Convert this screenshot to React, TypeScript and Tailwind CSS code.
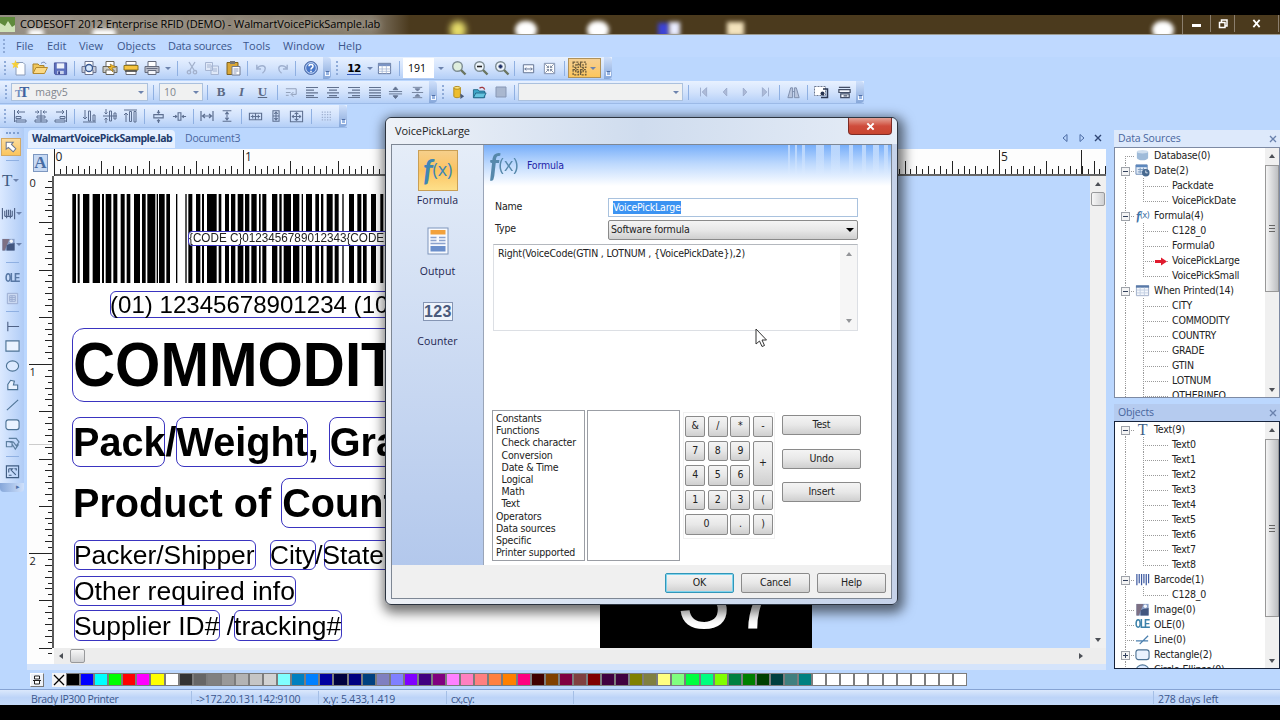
import { ReactNode } from 'react';
import clsx from 'clsx';

const glyphs: Record<string, ReactNode> = {
  new: (
    <>
      <path d="M5 2.500h7l2 2V15H5z" fill="#fdfeff" stroke="#8a9cba" />
      <path d="M4.500 0l1.200 3 3 .3-2.200 2 .8 3-2.800-1.600L1.700 8.300l.8-3L.3 3.300l3-.3z" fill="#f5cf3a" />
    </>
  ),
  open: (
    <>
      <path d="M1 13V4h5l1.500 1.500H12V8" fill="#f0c75c" stroke="#a9822b" />
      <path d="M1 13.500L4 7.500h11.500L12.500 13.500z" fill="#fbd984" stroke="#b58a2e" />
      <path d="M9 3.500c2-2 4-1.500 5 .5" fill="none" stroke="#6a7fae" />
    </>
  ),
  save: (
    <>
      <path d="M1.500 2h13v12.500h-12L1.500 13z" fill="#5b6fbd" stroke="#46539c" />
      <path d="M4 2.500h8v5.500H4z" fill="#eef2fb" />
      <path d="M4.500 10.500h7V14h-7z" fill="#c9d3ec" />
      <path d="M5.500 11h2v3h-2z" fill="#36428a" />
    </>
  ),
  preview: (
    <>
      <path d="M1 6.500h14v6H1z" fill="#c5cad8" stroke="#6b7490" />
      <path d="M4 1.500h8v5H4zM4 10h8v4.500H4z" fill="#fff" stroke="#6b7490" />
      <circle cx="8" cy="8" r="3.500" fill="#d7e8fb" stroke="#35558f" strokeWidth="1.300" />
    </>
  ),
  printFast: (
    <>
      <path d="M1 6.500h14v6H1z" fill="#c9c9c2" stroke="#69665c" />
      <path d="M4 1.500h8v5H4zM4 10h8v4.500H4z" fill="#fff" stroke="#69665c" />
      <path d="M8 4l6 3-4 1 1 4-5-5 3-.5z" fill="#f1b829" stroke="#8d6a14" strokeWidth=".6" />
    </>
  ),
  printLabel: (
    <>
      <path d="M3 1.500h10V5H3zM3 11h10v3.500H3z" fill="#fff" stroke="#6d6e76" />
      <path d="M1 5.500h14v4.500H1z" fill="#f6c441" stroke="#8c741f" />
      <path d="M2 11h12" stroke="#444" strokeWidth="1.400" />
    </>
  ),
  print: (
    <>
      <path d="M1 6.500h14v6H1z" fill="#b9bdc9" stroke="#656b7c" />
      <path d="M4 1.500h8v5H4z" fill="#fff" stroke="#656b7c" />
      <path d="M4 10.500h8v4H4z" fill="#f3f5fa" stroke="#656b7c" />
      <path d="M2.500 8.500h11" stroke="#666c80" />
    </>
  ),
  cut: (
    <path d="M5 2l5 8M11 2l-5 8M5 10.500a1.700 1.700 0 100 3.400 1.700 1.700 0 000-3.400M11 10.500a1.700 1.700 0 100 3.400 1.700 1.700 0 000-3.400" fill="none" stroke="#a3b1cc" strokeWidth="1.300" />
  ),
  copy: (
    <path d="M1.500 2.500h7v8h-7zM7 6h7.500v8.500H7zM3 5h4M3 7h3M9 9h4M9 11h4" fill="#dfe8f8" stroke="#a6b5d2" />
  ),
  paste: (
    <>
      <path d="M2 2.500h11v12H2z" fill="#d9a737" stroke="#7e6222" />
      <path d="M5 1h5v3H5z" fill="#777" />
      <path d="M7 6.500h8v8.500H7z" fill="#fff" stroke="#6f7890" />
      <path d="M8.500 9h5M8.500 11h5M8.500 13h3" stroke="#8b98ba" />
    </>
  ),
  undo: <path d="M3 4v4.500h4.500M3.500 8C6 4 12 4 12 8c0 2-1 3.500-3 5" fill="none" stroke="#9fb0cf" strokeWidth="1.500" />,
  redo: <path d="M13 4v4.500H8.500M12.500 8C10 4 4 4 4 8c0 2 1 3.500 3 5" fill="none" stroke="#9fb0cf" strokeWidth="1.500" />,
  help: (
    <>
      <circle cx="8" cy="8" r="6.500" fill="#4a78c8" stroke="#5671a8" />
      <circle cx="8" cy="8" r="5.300" fill="none" stroke="#c7d8f4" />
      <path d="M6 6.300C6 4 10 4 10 6.300 10 8 8 7.800 8 9.500M8 10.800v1.400" fill="none" stroke="#fff" strokeWidth="1.500" />
    </>
  ),
  table: (
    <>
      <path d="M1.500 2.500h13v11h-13z" fill="#fff" stroke="#5b7099" />
      <path d="M1.500 3h13v2.500h-13z" fill="#7b94c4" />
      <path d="M1.500 8.500h13M1.500 11h13M5.500 5v8.500M10 5v8.500" stroke="#a3b4d4" strokeWidth=".8" />
    </>
  ),
  zoom: (
    <>
      <circle cx="6.500" cy="6.500" r="4.800" fill="#dfeedd" stroke="#7d8c93" strokeWidth="1.400" />
      <path d="M10 10l4.500 4.500" stroke="#6b7560" strokeWidth="2.400" />
    </>
  ),
  zoomOut: (
    <>
      <circle cx="6.500" cy="6.500" r="4.800" fill="#eef5fb" stroke="#7d8c93" strokeWidth="1.400" />
      <path d="M10 10l4.500 4.500" stroke="#6b7560" strokeWidth="2.400" />
      <path d="M4 6.500h5" stroke="#222" strokeWidth="1.600" />
    </>
  ),
  zoomIn: (
    <>
      <circle cx="6.500" cy="6.500" r="4.800" fill="#eef5fb" stroke="#7d8c93" strokeWidth="1.400" />
      <path d="M10 10l4.500 4.500" stroke="#6b7560" strokeWidth="2.400" />
      <path d="M4.500 6.500h4M6.500 4.500v4" stroke="#1d2f66" strokeWidth="2" />
    </>
  ),
  fitWidth: (
    <path d="M2.500 4h11v8.500h-11zM4 8.500h8M5.500 7L4 8.500 5.500 10M10.500 7L12 8.500 10.500 10" fill="#f6f9ff" stroke="#5f708f" />
  ),
  fitPage: (
    <>
      <path d="M2.500 2.500h11v11h-11z" fill="#fff" stroke="#7c8cab" />
      <path d="M3.500 3.500L7 7M12.500 3.500L9 7M3.500 12.500L7 9M12.500 12.500L9 9M5 7h2V5M11 7H9V5M5 9h2v2M11 9H9v2" fill="none" stroke="#5f6d88" strokeWidth=".8" />
    </>
  ),
  nodes: (
    <path d="M2 2h5v5H2zM9 2h5v5H9zM2 9h5v5H2zM9 9h5v5H9zM4.500 4.500h7v7h-7z" fill="none" stroke="#6e5d3c" strokeDasharray="2 1" strokeWidth="1.200" />
  ),
  wrap: <path d="M2 4h11v6H8M10 7.500L7.500 10 10 12.500M2 8h5M2 11h3" fill="none" stroke="#8f9db6" />,
  left: <path d="M2 3.500h12M2 6.200h8M2 8.900h12M2 11.600h8M2 13.500h12" stroke="#62728f" strokeWidth="1.200" />,
  center: <path d="M2 3.500h12M4 6.200h8M2 8.900h12M4 11.600h8M2 13.500h12" stroke="#62728f" strokeWidth="1.200" />,
  right: <path d="M2 3.500h12M6 6.200h8M2 8.900h12M6 11.600h8M2 13.500h12" stroke="#62728f" strokeWidth="1.200" />,
  justify: <path d="M2 3.500h12M2 6.200h12M2 8.900h12M2 11.600h12M2 13.500h12" stroke="#62728f" strokeWidth="1.200" />,
  spaceOut: (
    <path d="M1 7h14M1 9.500h14M8 2L5.500 5h5zM8 14.500L5.500 11.500h5z" fill="#62728f" stroke="#62728f" />
  ),
  spaceIn: (
    <path d="M2 8h12M8 6.500L5.500 4h5zM8 9.500L5.500 12h5zM3 2.500h10M3 13.500h10" fill="#72819d" stroke="#72819d" />
  ),
  alignLeft: <path d="M2.500 2v12M5 4h8M7 2L5 4l2 2M4 8.500h5v2H4zM4 12h10v2H4z" fill="none" stroke="#5d6f90" />,
  alignMid: <path d="M8 2v12M2 4h4M14 4h-4M4 8h8v2H4zM2 12h12v2H2zM4.500 2.500L6 4 4.500 5.500M11.500 2.500L10 4l1.500 1.500" fill="none" stroke="#5d6f90" />,
  alignRight: <path d="M13.500 2v12M11 4H3M9 2l2 2-2 2M7 8.500h5v2H7zM2 12h10v2H2z" fill="none" stroke="#5d6f90" />,
  alignBottom: <path d="M2 14h13M4 2v9M2 9l2 2 2-2M7.500 3h2v10h-2zM12 7h2v6h-2z" fill="none" stroke="#5d6f90" />,
  alignMiddle: <path d="M1 8h14M4 1v5M4 15v-5M2.500 4.500L4 6l1.500-1.500M2.500 11.500L4 10l1.500 1.500M7.500 3h2v10h-2zM12 5h2v6h-2z" fill="none" stroke="#5d6f90" />,
  alignTop: <path d="M2 2h13M4 14V5M2 7l2-2 2 2M7.500 3.500h2v10h-2zM12 3.500h2V14h-2z" fill="none" stroke="#5d6f90" />,
  distV: <path d="M3 6h10v3.500H3zM8 1v3.500M8 15v-3.500M6.500 3L8 4.500 9.500 3M6.500 13L8 11.500 9.500 13" fill="none" stroke="#5d6f90" strokeWidth="1.200" />,
  distH: <path d="M6.500 4h3v8h-3zM1 8h4M15 8h-4M3.500 6.500L5 8 3.500 9.500M12.500 6.500L11 8l1.500 1.500" fill="none" stroke="#5d6f90" strokeWidth="1.200" />,
  gapH: <path d="M2 3v10M14 3v10M3.500 8h9M6 6L3.500 8 6 10M10 6l2.500 2L10 10" fill="none" stroke="#5d6f90" strokeWidth="1.200" />,
  gapV: <path d="M3 2h10M3 14h10M8 3.500v9M6 6l2-2.500L10 6M6 10l2 2.500L10 10" fill="none" stroke="#5d6f90" strokeWidth="1.200" />,
  sameW: <path d="M1.500 4.500h13v7h-13zM3 8h10M5 6v4M11 6v4M8 5v6" fill="none" stroke="#5d6f90" strokeWidth="1.200" />,
  sameH: <path d="M4.500 2h7v12h-7zM8 3v10M6 5.500L8 3.500l2 2M6 10.500l2 2 2-2M5 8h6" fill="none" stroke="#5d6f90" strokeWidth="1.200" />,
  sameBoth: <path d="M1.500 2.500h13v11h-13zM8 4v8M3.500 8h9M6 5.500L8 4l2 1.500M6 10.500L8 12l2-1.500M5 6.500L3.500 8 5 9.500M11 6.500L12.500 8 11 9.500" fill="none" stroke="#5d6f90" strokeWidth="1.100" />,
  gridDots: <path d="M2 3.500h12M2 6.500h12M2 9.500h12M2 12.500h12" stroke="#9fb0cf" strokeDasharray="1.500 1.500" strokeWidth="1.300" />,
  db: (
    <>
      <path d="M3 3v9c0 2 7 2 7 0V3z" fill="#edbd2d" stroke="#b08a1c" />
      <ellipse cx="6.500" cy="3" rx="3.500" ry="1.500" fill="#fbe37c" stroke="#b08a1c" />
      <path d="M10 9l4 3-4 3z" fill="#4a5a78" />
    </>
  ),
  dbOpen: (
    <>
      <path d="M1.500 13.500V5h5l1 1.500h6v7z" fill="#3da7c9" stroke="#21688a" />
      <path d="M1.500 13.500l2.500-5h11l-2.500 5z" fill="#65c3de" stroke="#21688a" />
      <path d="M8 3.500c2-2 5-1 5.500 1.500" fill="none" stroke="#a2373c" strokeWidth="1.300" />
    </>
  ),
  box: <path d="M3 3h10v10H3z" fill="#a9b7cf" stroke="#8797b5" />,
  first: <path d="M4 3v10M11 3v10L6 8z" fill="#aebbd8" stroke="#9aa9c9" />,
  prev: <path d="M10 3.500v9L6 8z" fill="#aebbd8" stroke="#9aa9c9" />,
  next: <path d="M6 3.500v9L10 8z" fill="#aebbd8" stroke="#9aa9c9" />,
  last: <path d="M12 3v10M5 3v10L10 8z" fill="#aebbd8" stroke="#9aa9c9" />,
  find: <path d="M2 13.500L5 3h2v10.500zM9 13.500V3h2l3 10.500zM7 7h2" fill="#b9c5dd" stroke="#7d8dab" />,
  formPrint: (
    <>
      <path d="M1.500 2.500h11v9h-11z" fill="#fff" stroke="#6c7890" strokeDasharray="2 1" />
      <path d="M10 5h4.500v8.500H8" fill="none" stroke="#2c3853" strokeWidth="1.500" />
      <circle cx="9.500" cy="9.500" r="2" fill="#26324f" />
    </>
  ),
  formMulti: (
    <path d="M2 2.500h12M2 5h12v3H2zM4 9.500h9v4H4zM7 11.500h4" fill="#f5f8ff" stroke="#434e66" strokeWidth="1.300" />
  ),
  pointer: <path d="M2.500 2.500h8L8.500 5l5 5-3 3.500-5.500-5-2.500 2z" fill="#fff" stroke="#6c7891" strokeWidth="1.200" />,
  barcode: <path d="M1.500 2v12M14.500 2v12M4 5v6M6 4v9M8 4v6M10 4v9M12 5v6M4 11h8" stroke="#4f6286" strokeWidth="1.200" fill="none" />,
  image: (
    <>
      <path d="M1.500 2h13v12.500h-13z" fill="#8aa0c8" />
      <path d="M1.500 2H9L4 14.500H1.500z" fill="#7d7084" />
      <path d="M6 9c3-3 6-1 8.500-3v8.500H6z" fill="#42567f" />
      <circle cx="11" cy="4.500" r="1.800" fill="#f4f6fb" />
    </>
  ),
  form: <path d="M2.500 2.500h11v11h-11zM5 5h6v6H5zM5 7h6M5 9h6M7.500 5v6" fill="#cbd9f1" stroke="#9bacd0" />,
  lineTool: <path d="M3 3v10M3 8h12" stroke="#4f6286" strokeWidth="1.200" />,
  rect: <path d="M1 3h14v11H1z" fill="#eaf3ff" stroke="#4d7395" strokeWidth="1.200" />,
  ellipse: <ellipse cx="8" cy="8.500" rx="6.500" ry="5.500" fill="#dceaff" stroke="#4d7395" strokeWidth="1.200" />,
  polygon: <path d="M3 13.500V8l3-4.500 4 1-1 4h4.500v5z" fill="#eaf3ff" stroke="#4d7395" strokeWidth="1.200" />,
  diagonal: <path d="M2 14L14 3" stroke="#4d7395" strokeWidth="1.200" />,
  rrect: <rect x="1" y="3" width="14" height="10.500" rx="2.500" fill="#eaf3ff" stroke="#4d7395" strokeWidth="1.200" />,
  shapes: (
    <path d="M4 2.500h8l3 4-3 4-3-4H5M1.500 6h6v5.500h-6zM7.500 8.500L11 14l3.500-5" fill="none" stroke="#5d7fa0" strokeWidth="1.200" />
  ),
  shortcut: <path d="M1.500 2h13v12.500h-13zM4 5h4L6.500 6.500l5 5M4 5v4M10 5h2v2M4 12h3" fill="none" stroke="#3f5c82" strokeWidth="1.200" />,
  dbGray: (
    <>
      <path d="M2 4v6c0 4 12 4 12 0V4z" fill="#9fbbd9" />
      <ellipse cx="8" cy="4" rx="6" ry="1.800" fill="#cfdeee" />
    </>
  ),
  date: (
    <>
      <path d="M1 2h12v10H1z" fill="#e4edf8" stroke="#6b8ab4" />
      <path d="M1 2h12v2.500H1z" fill="#5c87bd" />
      <path d="M3 7h8M3 9.500h8M5.500 5v6M9 5v6" stroke="#7796bd" />
      <circle cx="11.500" cy="10.500" r="4" fill="#47698f" />
      <path d="M11.500 8v2.500h2" stroke="#dfe9f5" fill="none" />
    </>
  ),
  printed: (
    <>
      <path d="M1.500 3h13v10.500h-13z" fill="#f4f7fc" stroke="#9eacc6" />
      <path d="M1 2.500h14V5H1z" fill="#5879a8" />
      <path d="M2 7.500h12M2 10.500h12M5.500 5v8M10 5v8" stroke="#c3cfe2" />
    </>
  ),
  lineBlue: <path d="M1 9.500h13M5 13l9-9" stroke="#4a7fae" strokeWidth="1.300" />,
  codes: (
    <path d="M2 2v12M4.500 2v10M7 2v12M9.500 2v10M12 2v12M14.500 2v10" stroke="#3d5aa0" strokeWidth="1.300" />
  ),
};

function Icon({ name, className = 'size-4' }: { name: string; className?: string }) {
  return (
    <svg viewBox="0 0 16 16" className={clsx('shrink-0', className)}>
      {glyphs[name]}
    </svg>
  );
}

function Cell({ w, children }: { w: string; children?: ReactNode }) {
  return <div className={clsx('flex h-full shrink-0 items-center justify-center', w)}>{children}</div>;
}

function Sep({ w }: { w: string }) {
  return (
    <Cell w={w}>
      <span className="h-[15px] w-px bg-[#8fb0e2]" />
    </Cell>
  );
}

function Grip({ w = 'w-[11px]' }: { w?: string }) {
  return (
    <Cell w={w}>
      <span className="h-[14px] border-l-2 border-dotted border-[#8fabd8]" />
    </Cell>
  );
}

function Caret({ w }: { w: string }) {
  return (
    <Cell w={w}>
      <span className="border-x-[3px] border-t-[3px] border-x-transparent border-t-[#6d83ad]" />
    </Cell>
  );
}

function EndCap() {
  return (
    <div className="flex h-full w-2 shrink-0 items-end justify-center rounded-r bg-linear-to-b from-[#cfe0fb] to-[#86a7da] pb-[3px]">
      <span className="h-[5px] w-[5px] border border-[#f4f8ff] border-t-[#4f6fa8]" />
    </div>
  );
}

const bar =
  'flex h-[23px] items-center bg-linear-to-b from-[#e8f1ff] via-[#d3e3fc] to-[#b4cff7] border-b border-[#9dbbe8]';

function MenuBar() {
  return (
    <div className="flex h-[22px] items-center bg-[#bfd9ff] font-['Open_Sans','Noto_Sans',sans-serif] text-[11px] text-[#3b568c]">
      <Grip w="w-[8px]" />
      <span className="ml-[8px] w-[31px]">File</span>
      <span className="w-8">Edit</span>
      <span className="w-[38px]">View</span>
      <span className="w-[51px]">Objects</span>
      <span className="w-[75px] tracking-[-0.250px]">Data sources</span>
      <span className="w-10">Tools</span>
      <span className="w-[55px]">Window</span>
      <span>Help</span>
    </div>
  );
}

function StandardBar() {
  return (
    <div className="flex h-6 pb-px">
      <div className={bar}>
        <Grip w="w-[9px]" />
        <Cell w="w-5"><Icon name="new" /></Cell>
        <Cell w="w-[21px]"><Icon name="open" /></Cell>
        <Cell w="w-[21px]"><Icon name="save" className="size-[15px]" /></Cell>
        <Sep w="w-[7px]" />
        <Cell w="w-[21px]"><Icon name="preview" /></Cell>
        <Cell w="w-[21px]"><Icon name="printFast" /></Cell>
        <Cell w="w-[21px]"><Icon name="printLabel" /></Cell>
        <Cell w="w-[22px]"><Icon name="print" /></Cell>
        <Caret w="w-[10px]" />
        <Sep w="w-[9px]" />
        <Cell w="w-5"><Icon name="cut" /></Cell>
        <Cell w="w-5"><Icon name="copy" /></Cell>
        <Cell w="w-[22px]"><Icon name="paste" /></Cell>
        <Sep w="w-[7px]" />
        <Cell w="w-[21px]"><Icon name="undo" className="size-[15px]" /></Cell>
        <Cell w="w-5"><Icon name="redo" className="size-[15px]" /></Cell>
        <Sep w="w-[7px]" />
        <Cell w="w-6"><Icon name="help" /></Cell>
        <EndCap />
      </div>
      <div className={bar}>
        <Grip w="w-3" />
        <Cell w="w-[22px]">
          <span className="border-b border-[#3558b8] font-['DejaVu_Sans',sans-serif] text-[10.500px] leading-[12px] font-bold tracking-[-0.5px] text-black">12</span>
        </Cell>
        <Caret w="w-[9px]" />
        <Cell w="w-[21px]"><Icon name="table" className="size-[15px]" /></Cell>
        <Sep w="w-[8px]" />
        <div className="flex h-[20px] w-[31px] items-center bg-white pt-px pl-[5px] font-['Open_Sans',sans-serif] text-[10.500px] text-black">191</div>
        <Caret w="w-[14px]" />
        <Cell w="w-[22px]"><Icon name="zoom" /></Cell>
        <Cell w="w-[21px]"><Icon name="zoomOut" /></Cell>
        <Cell w="w-[21px]"><Icon name="zoomIn" /></Cell>
        <Sep w="w-[5px]" />
        <Cell w="w-[22px]"><Icon name="fitWidth" className="size-[15px]" /></Cell>
        <Cell w="w-[21px]"><Icon name="fitPage" className="size-[15px]" /></Cell>
        <Sep w="w-[8px]" />
        <div className="mr-[3px] flex h-[20px] w-[33px] items-center justify-center border border-[#b0925a] bg-linear-to-b from-[#f5cf92] to-[#fdc65a]">
          <Icon name="nodes" className="size-[17px]" />
          <Caret w="w-[11px]" />
        </div>
        <EndCap />
      </div>
    </div>
  );
}

function TextBar() {
  return (
    <div className="flex h-6 pb-px">
      <div className={bar}>
        <Grip />
        <div className="flex h-[18px] w-[137px] items-center border border-[#abc1de] bg-[#f0f1f1] pl-[3px] font-['Open_Sans',sans-serif] text-[10.500px] text-[#80858d]">
          <span className="font-['Liberation_Serif',serif] text-[15px] font-bold tracking-[-3px] text-[#3f639f]">
            <span className="text-[11px] text-[#6f8cbd]">T</span>T
          </span>
          <span className="ml-[9px] flex-1 pt-px">magv5</span>
          <Caret w="w-3" />
        </div>
        <Sep w="w-[11px]" />
        <div className="flex h-[18px] w-[44px] items-center border border-[#abc1de] bg-[#f0f1f1] pl-[4px] font-['Open_Sans',sans-serif] text-[10.500px] text-[#80858d]">
          <span className="flex-1 pt-px">10</span>
          <Caret w="w-3" />
        </div>
        <Sep w="w-[8px]" />
        <div className="flex font-['Liberation_Serif',serif] text-[13px] font-bold text-[#5b6a85]">
          <Cell w="w-5">B</Cell>
          <Cell w="w-[21px]"><i>I</i></Cell>
          <Cell w="w-[21px]"><u>U</u></Cell>
        </div>
        <Sep w="w-[8px]" />
        <Cell w="w-[21px]"><Icon name="wrap" className="size-[15px]" /></Cell>
        <Cell w="w-5"><Icon name="left" /></Cell>
        <Cell w="w-[21px]"><Icon name="center" /></Cell>
        <Cell w="w-[21px]"><Icon name="right" /></Cell>
        <Cell w="w-[21px]"><Icon name="justify" /></Cell>
        <Cell w="w-5"><Icon name="spaceOut" className="size-[15px]" /></Cell>
        <Cell w="w-6"><Icon name="spaceIn" className="size-[15px]" /></Cell>
        <EndCap />
      </div>
      <div className={bar}>
        <Grip />
        <Cell w="w-[21px]"><Icon name="db" className="size-[15px]" /></Cell>
        <Cell w="w-[21px]"><Icon name="dbOpen" className="size-[15px]" /></Cell>
        <Cell w="w-[21px]"><Icon name="box" /></Cell>
        <Sep w="w-[7px]" />
        <div className="flex h-[18px] w-[165px] items-center justify-end border border-[#abc1de] bg-[#f0f1f1]">
          <Caret w="w-3" />
        </div>
        <Sep w="w-[11px]" />
        <Cell w="w-5"><Icon name="first" className="size-[14px]" /></Cell>
        <Cell w="w-[21px]"><Icon name="prev" className="size-[14px]" /></Cell>
        <Cell w="w-[19px]"><Icon name="next" className="size-[14px]" /></Cell>
        <Cell w="w-[21px]"><Icon name="last" className="size-[14px]" /></Cell>
        <Sep w="w-[8px]" />
        <Cell w="w-[21px]"><Icon name="find" className="size-[15px]" /></Cell>
        <Sep w="w-[6px]" />
        <Cell w="w-[22px]"><Icon name="formPrint" /></Cell>
        <Cell w="w-[24px]"><Icon name="formMulti" className="size-[15px]" /></Cell>
        <EndCap />
      </div>
    </div>
  );
}

function AlignBar() {
  return (
    <div className="flex h-6 pb-px">
      <div className={bar}>
        <Grip w="w-[9px]" />
        <Cell w="w-[21px]"><Icon name="alignLeft" /></Cell>
        <Cell w="w-[21px]"><Icon name="alignMid" /></Cell>
        <Cell w="w-[20px]"><Icon name="alignRight" /></Cell>
        <Sep w="w-[7px]" />
        <Cell w="w-[21px]"><Icon name="alignBottom" /></Cell>
        <Cell w="w-[21px]"><Icon name="alignMiddle" /></Cell>
        <Cell w="w-[20px]"><Icon name="alignTop" /></Cell>
        <Sep w="w-[8px]" />
        <Cell w="w-[21px]"><Icon name="distV" className="size-[15px]" /></Cell>
        <Cell w="w-[20px]"><Icon name="distH" className="size-[15px]" /></Cell>
        <Sep w="w-[8px]" />
        <Cell w="w-[20px]"><Icon name="gapH" /></Cell>
        <Cell w="w-[20px]"><Icon name="gapV" className="size-[14px]" /></Cell>
        <Sep w="w-[8px]" />
        <Cell w="w-[21px]"><Icon name="sameW" className="size-[15px]" /></Cell>
        <Cell w="w-[20px]"><Icon name="sameH" className="size-[14px]" /></Cell>
        <Cell w="w-[21px]"><Icon name="sameBoth" className="size-[15px]" /></Cell>
        <Sep w="w-[8px]" />
        <Cell w="w-[24px]"><Icon name="gridDots" className="size-[14px]" /></Cell>
        <EndCap />
      </div>
    </div>
  );
}

function ToolSep({ h }: { h: string }) {
  return (
    <div className={clsx('flex w-full items-center justify-center', h)}>
      <span className="h-px w-[13px] bg-[#8fb0e2]" />
    </div>
  );
}

function Tool({ h, name, caret }: { h: string; name: string; caret?: boolean }) {
  return (
    <div className={clsx('flex w-full items-center', h, caret ? 'pl-px' : 'pl-[5px]')}>
      <Icon name={name} className="size-[15px]" />
      {caret && <Caret w="w-[6px]" />}
    </div>
  );
}

function ToolBox() {
  return (
    <div className="w-6 shrink-0">
      <div className="flex h-[355px] flex-col bg-linear-to-r from-[#dbe9ff] to-[#b0ccf6] pt-[4px]">
        <div className="mx-auto mb-[4px] w-[13px] border-t-2 border-dotted border-[#7f9fd0]" />
        <div className="ml-px flex h-[18px] w-[20px] items-center justify-center border border-[#d3a964] bg-linear-to-b from-[#fbdb9a] to-[#fbc55c]">
          <Icon name="pointer" className="size-[14px]" />
        </div>
        <ToolSep h="h-2" />
        <div className="flex h-[33px] items-center pl-[2px] font-['Liberation_Serif',serif] text-[17px] text-[#3f5c82]">
          T<Caret w="w-[8px]" />
        </div>
        <Tool h="h-[32px]" name="barcode" caret />
        <Tool h="h-[30px]" name="image" caret />
        <ToolSep h="h-[7px]" />
        <div className="flex h-[25px] scale-y-125 items-center pl-[5px] font-['Liberation_Mono',monospace] text-[10.500px] font-bold tracking-[-1.800px] text-[#5878a5]">OLE</div>
        <Tool h="h-[15px]" name="form" />
        <ToolSep h="h-[10px]" />
        <Tool h="h-[20px]" name="lineTool" />
        <Tool h="h-[19px]" name="rect" />
        <Tool h="h-5" name="ellipse" />
        <Tool h="h-[19px]" name="polygon" />
        <Tool h="h-[20px]" name="diagonal" />
        <Tool h="h-5" name="rrect" />
        <Tool h="h-[19px]" name="shapes" />
        <ToolSep h="h-[7px]" />
        <Tool h="h-[22px]" name="shortcut" />
      </div>
      <div className="flex h-[9px] items-center justify-end rounded-b bg-linear-to-r from-[#86a7da] to-[#cfe0fb] pr-1 text-[7px] text-[#4f6fa8]">▸</div>
    </div>
  );
}

const INCH = 189;
const ticks = (count: number) => Array.from({ length: count }, (_, i) => i + 1);

function TopRuler() {
  return (
    <svg className="block h-[27px] w-[1052px] shrink-0" viewBox="0 0 1052 27">
      <rect width="1052" height="27" fill="#fdfdfd" />
      {ticks(178).map((i) => {
        const x = Math.round((i * INCH) / 32) + 0.5;
        const top = i % 32 === 0 ? 1 : i % 8 === 0 ? 12 : i % 2 === 0 ? 17 : 20;
        return <path key={i} d={`M${x} ${top}V25`} stroke="#222" />;
      })}
      <path d="M.5 0V27M1027.500 1V25" stroke="#222" />
      <path d="M0 26H1052" stroke="#333" strokeWidth="1.600" />
      <g fontFamily="Open Sans, sans-serif" fontSize="12" fill="#222">
        <text x="1.500" y="12">0</text>
        <text x="191" y="12">1</text>
        <text x="947" y="12">5</text>
      </g>
    </svg>
  );
}

function SideRuler() {
  return (
    <svg className="block h-[488px] w-[27px] shrink-0" viewBox="0 0 27 488">
      <rect width="27" height="488" fill="#fdfdfd" />
      {ticks(81).map((i) => {
        const y = Math.round((i * INCH) / 32) - 0.5;
        const left = i % 32 === 0 ? 2 : i % 8 === 0 ? 12 : i % 2 === 0 ? 18 : 21;
        return <path key={i} d={`M${left} ${y}H25`} stroke="#222" />;
      })}
      <path d="M2 268.500H25" stroke="#ccc" />
      <path d="M26 0V472" stroke="#333" strokeWidth="1.600" />
      <g fontFamily="Open Sans, sans-serif" fontSize="11" fill="#222">
        <text x="2.500" y="11">0</text>
        <text x="2.500" y="200">1</text>
        <text x="2.500" y="389">2</text>
      </g>
    </svg>
  );
}

// [start, end] of every bar, in thirds of a pixel from the left edge of the label
const bars = [
  [52, 63], [68, 74], [84, 103], [113, 135], [141, 147], [152, 169], [175, 187], [197, 209],
  [215, 226], [237, 255], [261, 272], [277, 301], [305, 309], [312, 329], [334, 345], [363, 367],
  [391, 395], [400, 412], [423, 436], [441, 447], [456, 485], [491, 499], [510, 522], [528, 541],
  [548, 565], [570, 583], [589, 605], [612, 617], [622, 634], [651, 667], [673, 680], [686, 708],
  [714, 733], [740, 744], [753, 771], [781, 792], [798, 805], [815, 833], [839, 851], [862, 866],
  [882, 897], [907, 919], [924, 935], [948, 963], [976, 985], [991, 1003],
];

const frame = 'absolute border border-[#3a34c0]';
const arial = "absolute whitespace-pre font-['Liberation_Sans',Arial,sans-serif] text-black leading-none origin-left";

function Label() {
  return (
    <div className="h-[472px] w-[758px] bg-white pl-px">
      <div className="relative h-[472px] w-[757px] overflow-hidden">
        <svg className="absolute top-[18px] left-0 h-[89px] w-[340px]" viewBox="0 0 1020 267" preserveAspectRatio="none">
          {bars.map(([a, b]) => (
            <rect key={a} x={a} y="0" width={b - a} height="267" fill="#000" />
          ))}
        </svg>
        <div className="absolute top-[55px] left-[133px] h-[15px] w-[300px] rounded border border-[#3a34c0] bg-white" />
        <div className={clsx(arial, 'top-[56px] left-[133.500px] scale-x-[0.975] text-[12px] !text-[#222]')}>{'{CODE C}0123456789012343{CODE'}</div>

        <div className={clsx(frame, 'top-[115px] left-[55px] h-[27px] w-[400px] rounded-md')} />
        <div className={clsx(arial, 'top-[117px] left-[55px] scale-x-[1.003] text-[24px]')}>(01) 12345678901234 (10)</div>

        <div className={clsx(frame, 'top-[152px] left-[17px] h-[74px] w-[500px] rounded-xl')} />
        <div className={clsx(arial, 'top-[157px] left-[17.500px] scale-x-[0.925] text-[63px] font-bold')}>COMMODITY</div>

        <div className={clsx(frame, 'top-[241px] left-[17px] h-[50px] w-[93px] rounded-lg')} />
        <div className={clsx(frame, 'top-[241px] left-[121px] h-[50px] w-[132px] rounded-lg')} />
        <div className={clsx(frame, 'top-[241px] left-[274px] h-[50px] w-[132px] rounded-lg')} />
        <div className={clsx(arial, 'top-[246px] left-[17.500px] scale-x-[0.966] text-[41px] font-bold')}>Pack/Weight, Grade</div>

        <div className={clsx(frame, 'top-[302px] left-[226px] h-[50px] w-[180px] rounded-lg')} />
        <div className={clsx(arial, 'top-[307px] left-[17.500px] scale-x-[0.967] text-[41px] font-bold')}>Product of Country</div>

        <div className={clsx(frame, 'top-[364px] left-[19px] h-[30px] w-[182px] rounded-md')} />
        <div className={clsx(frame, 'top-[364px] left-[215px] h-[30px] w-[46px] rounded-md')} />
        <div className={clsx(frame, 'top-[364px] left-[269px] h-[30px] w-[90px] rounded-md')} />
        <div className={clsx(arial, 'top-[366px] left-[19px] scale-x-[1.016] text-[26px]')}>Packer/Shipper</div>
        <div className={clsx(arial, 'top-[366px] left-[215px] scale-x-[1.01] text-[26px]')}>City/State</div>

        <div className={clsx(frame, 'top-[400px] left-[19px] h-[30px] w-[222px] rounded-md')} />
        <div className={clsx(arial, 'top-[403px] left-[19px] scale-x-[1.027] text-[25.800px]')}>Other required info</div>

        <div className={clsx(frame, 'top-[434px] left-[19px] h-[31px] w-[146px] rounded-md')} />
        <div className={clsx(frame, 'top-[434px] left-[179px] h-[31px] w-[108px] rounded-md')} />
        <div className={clsx(arial, 'top-[438px] left-[19px] scale-x-[1.024] text-[25.800px]')}>Supplier ID# /tracking#</div>

        <div className="absolute top-[380px] right-0 h-[92px] w-[212px] bg-black" />
        <div className={clsx(arial, 'top-[370px] left-[622px] text-[97px] !text-white')}>37</div>
      </div>
    </div>
  );
}

function ScrollArrow({ dir }: { dir: 'up' | 'down' | 'left' | 'right' }) {
  const paths = { up: 'M1 6L4 2 7 6z', down: 'M1 2L4 6 7 2z', left: 'M6 1L2 4 6 7z', right: 'M2 1L6 4 2 7z' };
  return (
    <svg viewBox="0 0 8 8" className="size-[8px] shrink-0">
      <path d={paths[dir]} fill="#4c4f55" />
    </svg>
  );
}

function Document() {
  return (
    <div className="ml-[3px] flex w-[1079px] shrink-0 flex-col">
      <div className="flex h-[21px] items-end pb-px font-['Open_Sans',sans-serif] text-[10.500px] text-[#35517f]">
        <div className="ml-px flex h-[18px] w-[147px] items-center rounded-t bg-[#e6f0ff] pl-1 font-bold tracking-[-0.500px] text-[#213a6b]">
          WalmartVoicePickSample.lab
        </div>
        <div className="flex h-[18px] flex-1 items-center pl-[10px] tracking-[-0.200px] text-[#4a66a0]">Document3</div>
        <svg viewBox="0 0 44 12" className="mr-px mb-[4px] h-3 w-[44px]">
          <path d="M6 2.500v7L2 6zM19 2.500v7L23 6z" fill="none" stroke="#4c6ca6" />
          <path d="M34 3l6 6M40 3l-6 6" stroke="#2f4675" strokeWidth="1.400" />
        </svg>
      </div>
      <div className="flex">
        <div className="flex h-[27px] w-[27px] shrink-0 items-center justify-center bg-[#fdfdfd]">
          <div className="flex h-[18px] w-[15px] items-center justify-center border border-[#7d97c0] bg-[#c7d9f3] font-['Liberation_Serif',serif] text-[17px] font-bold text-[#476ca4]">A</div>
        </div>
        <TopRuler />
      </div>
      <div className="flex">
        <SideRuler />
        <div className="flex w-[1052px] flex-col">
          <div className="flex h-[472px]">
            <div className="w-[1036px] bg-[#bbd7fe]">
              <Label />
            </div>
            <div className="flex flex-1 flex-col items-center justify-between bg-[#f0f0f0] py-[4px]">
              <div className="flex flex-col items-center gap-[4px]">
                <ScrollArrow dir="up" />
                <div className="h-[14px] w-[14px] rounded-xs border border-[#98999b] bg-linear-to-r from-[#f7f7f7] to-[#cfd0d2]" />
              </div>
              <ScrollArrow dir="down" />
            </div>
          </div>
          <div className="flex h-[16px] items-center bg-[#ededed] pl-[3px]">
            <ScrollArrow dir="left" />
            <div className="ml-[5px] h-[14px] w-[15px] rounded-xs border border-[#98999b] bg-linear-to-b from-[#f7f7f7] to-[#cfd0d2]" />
            <div className="flex flex-1 justify-end pr-[21px]">
              <ScrollArrow dir="right" />
            </div>
          </div>
        </div>
      </div>
      <div className="h-[6px] bg-[#d5e4fb]" />
    </div>
  );
}

type Node = {
  text: string;
  icon?: string;
  child?: boolean;
  box?: '-' | '+';
  first?: boolean;
  last?: boolean;
};

const dataSources: Node[] = [
  { text: 'Database(0)', icon: 'dbGray', first: true },
  { text: 'Date(2)', icon: 'date', box: '-' },
  { text: 'Packdate', child: true },
  { text: 'VoicePickDate', child: true, last: true },
  { text: 'Formula(4)', icon: 'fx', box: '-' },
  { text: 'C128_0', child: true },
  { text: 'Formula0', child: true },
  { text: 'VoicePickLarge', child: true, icon: 'redArrow' },
  { text: 'VoicePickSmall', child: true, last: true },
  { text: 'When Printed(14)', icon: 'printed', box: '-' },
  { text: 'CITY', child: true },
  { text: 'COMMODITY', child: true },
  { text: 'COUNTRY', child: true },
  { text: 'GRADE', child: true },
  { text: 'GTIN', child: true },
  { text: 'LOTNUM', child: true },
  { text: 'OTHERINFO', child: true },
];

const objects: Node[] = [
  { text: 'Text(9)', icon: 'T', box: '-', first: true },
  ...Array.from({ length: 9 }, (_, i) => ({ text: `Text${i}`, child: true, last: i === 8 })),
  { text: 'Barcode(1)', icon: 'codes', box: '-' },
  { text: 'C128_0', child: true, last: true },
  { text: 'Image(0)', icon: 'image' },
  { text: 'OLE(0)', icon: 'OLE' },
  { text: 'Line(0)', icon: 'lineBlue' },
  { text: 'Rectangle(2)', icon: 'rrect', box: '+' },
  { text: 'Circle-Ellipse(0)', icon: 'ellipse' },
];

function NodeIcon({ icon }: { icon: string }) {
  if (icon === 'fx') {
    return (
      <span className="flex w-[15px] items-center justify-center font-['DejaVu_Sans_Condensed','DejaVu_Sans',sans-serif] text-[9.500px] tracking-[-0.900px] text-[#3f73a8]">
        <b className="font-['Lato',sans-serif] text-[14px] italic">f</b>(x)
      </span>
    );
  }
  if (icon === 'T') {
    return <span className="w-[15px] text-center font-['Liberation_Serif',serif] text-[16px] leading-[15px] text-[#3f5f88]">T</span>;
  }
  if (icon === 'OLE') {
    return (
      <span className="w-[15px] scale-y-125 font-['Liberation_Mono',monospace] text-[10.500px] font-bold tracking-[-1.800px] text-[#3d82aa]">
        OLE
      </span>
    );
  }
  return <Icon name={icon} className="size-[15px]" />;
}

function TreeRow({ node }: { node: Node }) {
  return (
    <div className="flex h-[15px] items-center">
      <svg className={clsx('h-[15px] shrink-0', node.child ? 'w-[57px]' : 'w-[20px]')}>
        <g stroke="#9a9a9a" strokeDasharray="1 1">
          <path d={node.first ? 'M10.500 8V15' : 'M10.500 0V15'} />
          <path d={node.child ? 'M28 8.500H53' : 'M10 8.500H20'} />
          {node.child && <path d={node.last ? 'M28.500 0V8' : 'M28.500 0V15'} />}
        </g>
        {node.box && (
          <>
            <rect x="6.500" y="4.500" width="8" height="8" fill="#f4f4f4" stroke="#9ea2a9" />
            <path d={node.box === '-' ? 'M8 8.500h5' : 'M8 8.500h5M10.500 6v5'} stroke="#33415c" />
          </>
        )}
        {node.icon === 'redArrow' && (
          <g fill="#e01b2e">
            <rect x="40" y="7" width="6" height="3" />
            <path d="M46 4.500L52 8.500 46 12.500z" />
          </g>
        )}
      </svg>
      {!node.child && node.icon && <NodeIcon icon={node.icon} />}
      <span className={clsx('whitespace-nowrap', !node.child && 'ml-[4px]')}>{node.text}</span>
    </div>
  );
}

type PanelProps = {
  title: string;
  nodes: Node[];
  bodyClass: string;
  headClass: string;
  thumb: string;
};

function Panel({ title, nodes, bodyClass, headClass, thumb }: PanelProps) {
  return (
    <div>
      <div className={clsx("flex h-[17px] items-center justify-between pl-1 font-['Open_Sans',sans-serif] text-[10.500px] text-[#48659d]", headClass)}>
        <span className="tracking-[-0.150px]">{title}</span>
        <svg viewBox="0 0 8 8" className="mr-[3px] size-2">
          <path d="M1 1l6 6M7 1L1 7" stroke="#6a82ad" strokeWidth="1.300" />
        </svg>
      </div>
      <div className={clsx('flex overflow-hidden border bg-white', bodyClass)}>
        <div className="w-[150px] shrink-0 overflow-hidden font-['DejaVu_Sans_Condensed','DejaVu_Sans',sans-serif] text-[10.500px] tracking-[-0.200px] text-[#222]">
          {nodes.map((node, i) => (
            <TreeRow key={i} node={node} />
          ))}
        </div>
        <div className="flex flex-1 flex-col items-center justify-between bg-[#f0f0f0] pt-[4px] pb-[3px]">
          <div className="flex w-full flex-col items-center gap-[5px]">
            <ScrollArrow dir="up" />
            <div className={clsx('flex w-full flex-col items-center justify-center gap-[2px] border border-[#989898] bg-linear-to-r from-[#f5f5f5] to-[#bdbfc2]', thumb)}>
              <span className="h-px w-[6px] bg-[#666]" />
              <span className="h-px w-[6px] bg-[#666]" />
              <span className="h-px w-[6px] bg-[#666]" />
            </div>
          </div>
          <ScrollArrow dir="down" />
        </div>
      </div>
    </div>
  );
}

const palette = [
  '#000000', '#0000ff', '#00ffff', '#00ff00', '#ff0000', '#ff00ff', '#ffff00', '#ffffff',
  '#333333', '#666666', '#808080', '#999999', '#b3b3b3', '#c5c5c5', '#d2d2d2', '#80ffff',
  '#0080c0', '#0080ff', '#0000a0', '#000040', '#000080', '#004080', '#8080c0', '#8080ff',
  '#8000ff', '#400080', '#800080', '#ff80ff', '#ff80c0', '#ff8080', '#ff8040', '#ff8000',
  '#ff0080', '#400000', '#804000', '#800040', '#804040', '#800000', '#400040', '#400040',
  '#808000', '#808040', '#ffff80', '#80ff80', '#00ff40', '#00ff80', '#80ff00', '#008040',
  '#008000', '#004000', '#004040', '#408080', '#008080', ...Array(11).fill('#ffffff'),
];

function ColorBar() {
  return (
    <div className="flex h-[19px] items-center bg-[#bbd7fe] pl-[30px]">
      <div className="flex h-[14px] w-[14px] items-center justify-center border border-white border-r-[#777] border-b-[#777] bg-[#eef2f8]">
        <svg viewBox="0 0 10 10" className="size-[10px]">
          <path d="M2.500 1h5v3h-5zM1 5.500h8M2.500 6v3h5V6" fill="#fff" stroke="#222" />
        </svg>
      </div>
      <svg viewBox="0 0 14 14" className="ml-[8px] h-[14px] w-[14px]">
        <rect width="14" height="14" fill="#f4f4f4" />
        <path d="M2 2l10 10M12 2L2 12" stroke="#000" strokeWidth="1.300" />
      </svg>
      <div className="flex w-[901px]">
        {palette.map((color, i) => (
          <span key={i} className="h-[13px] flex-1 border border-[#7c7c7c]" style={{ backgroundColor: color }} />
        ))}
      </div>
    </div>
  );
}

function StatusBar() {
  return (
    <div className="flex h-[16px] shrink-0 items-center border-t border-[#86a3d3] bg-linear-to-b from-[#dbe8fc] via-[#bdd4f8] to-[#c4daf9] pl-[31px] font-['Open_Sans',sans-serif] text-[10.500px] leading-none tracking-[-0.300px] text-[#3b568c]">
      <span className="w-[160px] pt-[3px] tracking-[-0.400px]">Brady IP300 Printer</span>
      <span className="w-[127px] border-l border-[#a5bfe6] pt-[3px] pl-1">-&gt;172.20.131.142:9100</span>
      <span className="w-[128px] border-l border-[#a5bfe6] pt-[3px] pl-1 tracking-[-0.200px]">x,y: 5.433,1.419</span>
      <span className="w-[127px] border-l border-[#a5bfe6] pt-[3px] pl-1 tracking-[-0.500px]">cx,cy:</span>
      <span className="w-[580px] border-l border-[#a5bfe6] pt-[3px]">&nbsp;</span>
      <span className="border-l border-[#a5bfe6] pt-[3px] pl-1 tracking-[-0.100px]">278 days left</span>
    </div>
  );
}

const button =
  'flex items-center justify-center rounded-[2px] border border-[#8a8a8a] bg-linear-to-b from-[#f4f4f4] from-0% via-[#e8e8e8] via-50% to-[#cfcfcf] to-100%';

const keys = [
  ['&', ''], ['/', ''], ['*', ''], ['-', ''],
  ['7', ''], ['8', ''], ['9', ''], ['+', 'row-span-2'],
  ['4', ''], ['5', ''], ['6', ''],
  ['1', ''], ['2', ''], ['3', ''], ['(', ''],
  ['0', 'col-span-2'], ['.', ''], [')', ''],
];

const categories = [
  'Constants', 'Functions', '  Check character', '  Conversion', '  Date & Time', '  Logical',
  '  Math', '  Text', 'Operators', 'Data sources', 'Specific', 'Printer supported',
];

function Fx({ className }: { className: string }) {
  return (
    <span className={clsx("flex items-center leading-none text-[#3f86b5] font-['Open_Sans',sans-serif]", className)}>
      <b className="font-['Lato',sans-serif] text-[30px] leading-none italic">f</b>
      <span className="text-[18px] tracking-[-0.200px]">(x)</span>
    </span>
  );
}

function DialogNav() {
  return (
    <div className="flex w-[92px] shrink-0 flex-col items-center border-r border-[#9aa5b8] bg-linear-to-b from-[#e5edf8] to-[#b3c8ec] pt-[5px] font-['Open_Sans',sans-serif] text-[10.500px] tracking-[0.100px] text-[#1d2550]">
      <div className="flex h-[41px] w-10 items-center justify-center border border-[#c99f55] bg-linear-to-b from-[#f6cf8a] via-[#fbc361] to-[#fde08a]">
        <Fx className="mb-1 tracking-tight" />
      </div>
      <span className="mt-[2px] leading-[15px]">Formula</span>
      <svg viewBox="0 0 22 28" className="mt-[19px] h-7 w-[22px]">
        <rect x="1" y="1" width="20" height="26" fill="#f6f9fe" stroke="#7f95bb" />
        <rect x="3.500" y="3" width="15" height="4.500" fill="#f2a13c" />
        <path d="M3.500 10.500h6M12 10.500h6.500M3.500 13.500h6M12 13.500h6.500M3.500 16.500h15" stroke="#8ba2cd" strokeWidth="1.500" />
        <rect x="3.500" y="19" width="15" height="5.500" fill="#6b8fcb" />
      </svg>
      <span className="mt-[9px] leading-[15px]">Output</span>
      <div className="mt-[23px] flex h-[19px] w-[30px] items-center justify-around border border-[#8595b3] bg-[#eef3fb] font-['Liberation_Sans',sans-serif] text-[16px] leading-none font-bold tracking-[-0.500px] text-[#4a5a7c]">
        <span>1</span><span>2</span><span>3</span>
      </div>
      <span className="mt-[13px] leading-[15px]">Counter</span>
    </div>
  );
}

function DialogForm() {
  return (
    <div className="flex min-w-0 flex-1 flex-col bg-white pr-[33px] text-[#222]">
      <div className="-mr-[33px] flex h-[41px] items-center bg-linear-to-b from-[#77aef9] via-[#bcd8fd] via-45% to-white">
        <Fx className="mb-[3px] ml-[5px] w-[38px] scale-y-105 !text-[#5688ab]" />
        <span className="flex-1 text-[10.500px] tracking-[-0.200px] text-[#2323a8]">Formula</span>
        <svg viewBox="0 0 106 30" className="mb-[11px] h-[30px] w-[106px]" preserveAspectRatio="none">
          <defs>
            <linearGradient id="streak" x1="0" x2="0" y1="0" y2="1">
              <stop offset="0" stopColor="#fff" stopOpacity=".5" />
              <stop offset="1" stopColor="#fff" stopOpacity="0" />
            </linearGradient>
          </defs>
          <g fill="url(#streak)">
            <rect x="3" width="2" height="30" />
            <rect x="10" width="2" height="30" />
            <rect x="17" width="3" height="30" />
            <rect x="31" width="8" height="30" />
            <rect x="46" width="9" height="30" />
            <rect x="64" width="4" height="30" />
            <rect x="77" width="4" height="30" />
            <rect x="88" width="6" height="30" />
            <rect x="99" width="4" height="30" />
          </g>
        </svg>
      </div>
      <div className="mt-[11px] ml-[11px] flex h-[20px] items-center">
        <span className="w-[113px] pb-px">Name</span>
        <div className="flex h-[19px] flex-1 items-center border border-[#a9c2de] bg-white pl-1">
          <span className="bg-[#3b93f2] leading-[13px] tracking-[-0.200px] text-white">VoicePickLarge</span>
        </div>
      </div>
      <div className="mt-[3px] ml-[11px] flex h-5 items-center">
        <span className="w-[113px] pb-[3px]">Type</span>
        <div className={clsx(button, 'h-5 flex-1 !justify-between pl-[2px]')}>
          <span>Software formula</span>
          <span className="mr-[3px] border-x-4 border-t-4 border-x-transparent border-t-black" />
        </div>
      </div>
      <div className="mt-[4px] ml-[9px] flex h-[87px] border border-[#dcdfe4] border-t-[#b4b8be]">
        <span className="flex-1 pt-[2px] pl-1 leading-[13px] tracking-[-0.200px] whitespace-nowrap">Right(VoiceCode(GTIN , LOTNUM , {'{VoicePickDate}'}),2)</span>
        <div className="flex w-[17px] flex-col items-center justify-between bg-[#f1f1f1] py-[5px] opacity-60">
          <ScrollArrow dir="up" />
          <ScrollArrow dir="down" />
        </div>
      </div>
      <div className="mt-[79px] -mr-[10px] ml-[8px] flex">
        <div className="h-[151px] w-[93px] shrink-0 border border-[#9b9ea5] pt-px pl-[3px]">
          {categories.map((category) => (
            <div key={category} className="h-[12.200px] leading-[12.200px] tracking-[-0.200px] whitespace-pre">
              {category}
            </div>
          ))}
        </div>
        <div className="ml-[2px] h-[151px] w-[93px] shrink-0 border border-[#9b9ea5]" />
        <div className="mt-[2px] ml-[3px] h-[127px] w-[92px] shrink-0 border border-[#f1f1f1] pt-[3px] pl-px">
          <div className="grid w-[88px] grid-cols-4 grid-rows-[repeat(5,20.500px)] gap-x-[2.500px] gap-y-[4px]">
            {keys.map(([label, span]) => (
              <div key={label} className={clsx(button, span)}>
                {label}
              </div>
            ))}
          </div>
        </div>
        <div className="mt-[5px] ml-[7px] flex flex-col gap-[13.500px]">
          <div className={clsx(button, 'h-5 w-[79px]')}>Test</div>
          <div className={clsx(button, 'h-5 w-[79px]')}>Undo</div>
          <div className={clsx(button, 'h-5 w-[79px]')}>Insert</div>
        </div>
      </div>
    </div>
  );
}

function Dialog() {
  return (
    <div className="absolute top-[117px] left-[385px] flex h-[488px] w-[513px] flex-col rounded-md border-[1.500px] border-[#2c3440] bg-linear-to-r from-[#eef1f6] via-[#d3e0f2] to-[#c5d2e9] px-[5px] pb-[5px] shadow-[2px_4px_12px_4px_rgba(0,0,0,0.55)]">
      <div className="-mx-[5px] flex h-[26px] shrink-0 items-start justify-between rounded-t-md bg-linear-to-r from-[#eef2f8] via-[#cfdcee] to-[#e6edf7] pr-[5px] pl-[9px]">
        <span className="pt-[5px] font-['Open_Sans',sans-serif] text-[11px] tracking-[-0.100px] text-[#222]">VoicePickLarge</span>
        <div className="flex h-[17px] w-[44px] items-center justify-center rounded-b border border-t-0 border-[#7c2b25] bg-linear-to-b from-[#e2a196] via-[#cf4c3c] via-50% to-[#c9452f]">
          <svg viewBox="0 0 10 10" className="size-[9px]">
            <path d="M1.500 1.500l7 7M8.500 1.500l-7 7" stroke="#fff" strokeWidth="2.200" />
          </svg>
        </div>
      </div>
      <div className="flex flex-1 flex-col border border-[#7e8794] bg-[#f0f0f0] font-['DejaVu_Sans_Condensed','DejaVu_Sans',sans-serif] text-[10.500px] tracking-[-0.150px]">
        <div className="flex h-[420px]">
          <DialogNav />
          <DialogForm />
        </div>
        <div className="flex flex-1 items-center justify-end gap-[7px] pt-[2px] pr-[5px] text-[#222]">
          <div className={clsx(button, 'h-5 w-[69px] !border-[#3296b8] shadow-[inset_0_0_0_1px_#7fd4ee]')}>OK</div>
          <div className={clsx(button, 'h-5 w-[69px]')}>Cancel</div>
          <div className={clsx(button, 'h-5 w-[69px]')}>Help</div>
        </div>
      </div>
    </div>
  );
}

function TitleBar() {
  return (
    <div className="relative flex h-5 shrink-0 items-center overflow-hidden border-b border-[#9c9a90] bg-linear-to-r from-[#958e84] from-0% via-[#857b6b] via-29% to-[#4b3a1d] to-32%">
      <div className="absolute top-[6px] left-[450px] h-[18px] w-[16px] rounded-full bg-[#e6dc6a] blur-[3px]" />
      <div className="absolute top-[6px] left-[515px] h-[18px] w-[22px] rounded-full bg-white blur-[2px]" />
      <div className="absolute top-[6px] left-[587px] h-[18px] w-[22px] rounded-full bg-white blur-[2px]" />
      <div className="absolute top-[8px] left-[658px] h-[14px] w-[11px] bg-[#3c43d8] blur-[2px]" />
      <div className="absolute top-[7px] left-[669px] h-[14px] w-[11px] bg-[#e9ecff] blur-[2px]" />
      <div className="absolute top-[7px] left-[727px] h-[14px] w-[17px] bg-[#f3e3bd] blur-[2px]" />
      <div className="absolute top-[6px] left-[1152px] h-[18px] w-[22px] rounded-full bg-white blur-[2px]" />
      <div className="absolute top-[14px] left-[28px] h-[8px] w-[16px] rounded-full bg-white blur-[2px]" />
      <div className="absolute top-[14px] left-[92px] h-[8px] w-[24px] rounded-full bg-white blur-[2px]" />
      <svg viewBox="0 0 15 15" className="relative size-[15px]">
        <rect width="15" height="15" fill="#5f8a3c" />
        <path d="M0 6l5 3 3-5 4 6 3-2v7H0z" fill="#cfe3b8" />
      </svg>
      <span className="relative ml-[5px] flex-1 font-['Open_Sans',sans-serif] text-[11px] tracking-[-0.080px] text-black [text-shadow:0_0_6px_#cfc9bd]">
        CODESOFT 2012 Enterprise RFID (DEMO) - WalmartVoicePickSample.lab
      </span>
      <div className="relative flex h-full items-start border-l border-[#8b7f6e] pr-px">
        <div className="flex h-[17px] w-[28px] items-center justify-center border-r border-[#8b7f6e]">
          <span className="mt-1 h-[3px] w-[9px] bg-white" />
        </div>
        <div className="flex h-[17px] w-[24px] items-center justify-center border-r border-[#8b7f6e]">
          <svg viewBox="0 0 10 10" className="size-[10px]">
            <path d="M3.500 3V1h5.500v6H7.500M1.500 3.500h5.500v5H1.500z" fill="none" stroke="#fff" strokeWidth="1.500" />
          </svg>
        </div>
        <div className="flex h-[17px] w-[44px] items-center justify-center border-r border-[#8b7f6e]">
          <svg viewBox="0 0 10 10" className="size-[9px]">
            <path d="M1.500 1l7 8M8.500 1l-7 8" stroke="#fff" strokeWidth="2" />
          </svg>
        </div>
      </div>
    </div>
  );
}

export default function App() {
  return (
    <div className="relative flex h-[720px] w-[1280px] flex-col overflow-hidden bg-black pt-[15px] pb-[15px]">
      <TitleBar />
      <div className="flex flex-1 flex-col bg-[#bbd7fe]">
        <MenuBar />
        <StandardBar />
        <TextBar />
        <AlignBar />
        <div className="-mt-px flex h-[542px]">
          <ToolBox />
          <Document />
          <div className="ml-[8px] flex flex-1 flex-col gap-[6px] pt-[2px]">
            <Panel title="Data Sources" nodes={dataSources} headClass="bg-[#dde9fb]" bodyClass="h-[251px] border-[#7d8aa3]" thumb="h-[127px]" />
            <Panel title="Objects" nodes={objects} headClass="bg-[#b5cbef]" bodyClass="h-[248px] border-[#16233c]" thumb="h-[178px]" />
          </div>
        </div>
        <ColorBar />
        <StatusBar />
      </div>
      <Dialog />
      <svg viewBox="0 0 14 20" className="absolute top-[328px] left-[755px] h-[20px] w-[14px]">
        <path d="M1 1v15l3.500-3 2.500 5.500 2.500-1-2.500-5.500h4.500z" fill="#fff" stroke="#333" />
      </svg>
    </div>
  );
}
